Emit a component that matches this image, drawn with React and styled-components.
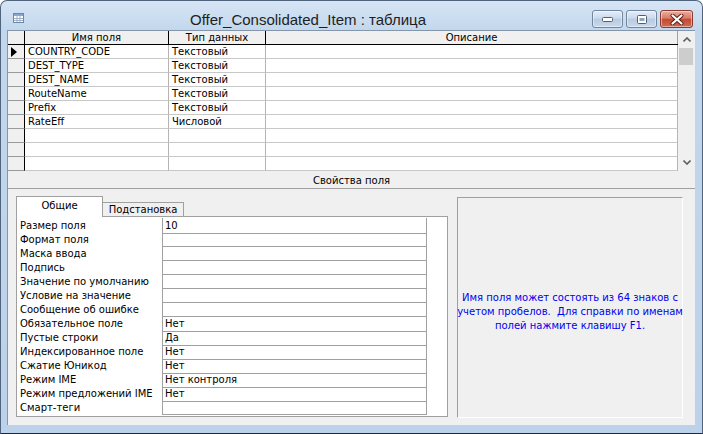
import React from 'react';
import styled, { createGlobalStyle } from 'styled-components';

const GlobalStyle = createGlobalStyle`
  html, body {
    margin: 0;
    padding: 0;
    background: #ffffff;
  }
  body {
    font-family: "DejaVu Sans", Tahoma, sans-serif;
    font-size: 10px;
    color: #000;
  }
`;

const fields = [
  { name: 'COUNTRY_CODE', type: 'Текстовый' },
  { name: 'DEST_TYPE', type: 'Текстовый' },
  { name: 'DEST_NAME', type: 'Текстовый' },
  { name: 'RouteName', type: 'Текстовый' },
  { name: 'Prefix', type: 'Текстовый' },
  { name: 'RateEff', type: 'Числовой' },
  { name: '', type: '' },
  { name: '', type: '' },
  { name: '', type: '' },
];

const props = [
  ['Размер поля', '10'],
  ['Формат поля', ''],
  ['Маска ввода', ''],
  ['Подпись', ''],
  ['Значение по умолчанию', ''],
  ['Условие на значение', ''],
  ['Сообщение об ошибке', ''],
  ['Обязательное поле', 'Нет'],
  ['Пустые строки', 'Да'],
  ['Индексированное поле', 'Нет'],
  ['Сжатие Юникод', 'Нет'],
  ['Режим IME', 'Нет контроля'],
  ['Режим предложений IME', 'Нет'],
  ['Смарт-теги', ''],
];

const Window = styled.div`
  width: 703px;
  height: 434px;
  box-sizing: border-box;
  border: 1px solid #50647e;
  border-bottom-color: #1d2a38;
  border-radius: 7px 7px 0 0;
  background: linear-gradient(#d6e5f5, #c2d7ed 30px, #bcd2ea);
  display: flex;
  flex-direction: column;
  padding: 0 7px 8px 6px;
  overflow: hidden;
`;

const TitleBar = styled.div`
  height: 29px;
  display: flex;
  align-items: flex-start;
`;

const AppIcon = styled.svg`
  margin: 12px 0 0 6px;
  flex: none;
`;

const Title = styled.div`
  flex: 1;
  text-align: center;
  font-family: "Liberation Sans", Arial, sans-serif;
  font-size: 15px;
  line-height: 18px;
  margin-top: 10px;
  color: #1e1e1e;
`;

const Buttons = styled.div`
  display: flex;
  gap: 3px;
  margin-top: 9px;
  margin-right: 2px;
`;

const CaptionButton = styled.div`
  width: ${p => p.$w}px;
  height: 18px;
  box-sizing: border-box;
  border: 1px solid ${p => (p.$close ? '#8c3a2f' : '#71859f')};
  border-radius: 3px;
  display: flex;
  align-items: center;
  justify-content: center;
  background: ${p =>
    p.$close
      ? 'linear-gradient(#eab0a2, #d87a66 45%, #c44a33 52%, #cf6a52)'
      : 'linear-gradient(#e6eef8, #cbd9ea 45%, #b7cbe2 52%, #c8d9ec)'};
  box-shadow: inset 0 0 0 1px rgba(255, 255, 255, 0.45);
`;

const Client = styled.div`
  flex: 1;
  display: flex;
  flex-direction: column;
  background: #f0f0f0;
  border-left: 1px solid #8596ab;
  border-top: 1px solid #8596ab;
  min-height: 0;
`;

const Upper = styled.div`
  height: 140px;
  display: flex;
  flex: none;
`;

const Grid = styled.div`
  flex: 1;
  background: #ffffff;
  overflow: hidden;
`;

const cols = '17px 144px 97px 1fr';

const HeaderRow = styled.div`
  display: grid;
  grid-template-columns: ${cols};
  height: 14px;
  box-sizing: border-box;
  border-bottom: 1px solid #000;
  background: #f0f0f0;
`;

const HeaderCell = styled.div`
  border-right: 1px solid ${p => (p.$strong ? '#000' : '#a0a0a0')};
  text-align: center;
  line-height: 14px;
  white-space: nowrap;
  overflow: hidden;
`;

const DataRow = styled.div`
  display: grid;
  grid-template-columns: ${cols};
  height: 14px;
`;

const Selector = styled.div`
  background: #f0f0f0;
  border-right: 1px solid #000;
  border-bottom: 1px solid #9a9a9a;
  display: flex;
  align-items: center;
  padding-left: 3px;
`;

const Cell = styled.div`
  border-right: 1px solid #b4b4b4;
  border-bottom: 1px solid #c8c8c8;
  padding-left: 3px;
  line-height: 14px;
  white-space: nowrap;
  overflow: hidden;
`;

const ScrollBar = styled.div`
  width: 17px;
  flex: none;
  background: #f0f0f0;
  display: flex;
  flex-direction: column;
`;

const ScrollButton = styled.div`
  height: 17px;
  display: flex;
  align-items: center;
  justify-content: center;
  flex: none;
`;

const Thumb = styled.div`
  height: 17px;
  margin: 0 2px 0 1px;
  background: #cdcdcd;
  flex: none;
`;

const Track = styled.div`
  flex: 1;
`;

const Band = styled.div`
  height: 18px;
  box-sizing: border-box;
  border-bottom: 1px solid #a0a0a0;
  text-align: center;
  line-height: 20px;
  flex: none;
`;

const Lower = styled.div`
  flex: 1;
  display: flex;
  gap: 9px;
  padding: 8px 0 0 8px;
`;

const PropsPane = styled.div`
  width: 432px;
  display: flex;
  flex-direction: column;
`;

const TabRow = styled.div`
  height: 20px;
  display: flex;
  align-items: flex-end;
  position: relative;
  z-index: 1;
  margin-bottom: -1px;
`;

const Tab = styled.div`
  box-sizing: border-box;
  width: ${p => (p.$active ? 87 : 81)}px;
  height: ${p => (p.$active ? 21 : 15)}px;
  border: 1px solid #a0a0a0;
  border-bottom: ${p => (p.$active ? 'none' : '1px solid #a0a0a0')};
  border-left: ${p => (p.$active ? '1px solid #a0a0a0' : 'none')};
  background: ${p => (p.$active ? '#ffffff' : '#f0f0f0')};
  text-align: center;
  line-height: ${p => (p.$active ? 18 : 14)}px;
`;

const PropBox = styled.div`
  height: 201px;
  box-sizing: border-box;
  border: 1px solid #a0a0a0;
  background: #ffffff;
  padding: 1px 20px 2px 0;
`;

const PropRow = styled.div`
  display: grid;
  grid-template-columns: 145px 265px;
  height: 14px;
`;

const PropLabel = styled.div`
  padding-left: 3px;
  line-height: 15px;
  white-space: nowrap;
`;

const PropValue = styled.div`
  box-sizing: border-box;
  border-left: 1px solid #a0a0a0;
  border-right: 1px solid #a0a0a0;
  border-bottom: 1px solid #a0a0a0;
  padding-left: 2px;
  line-height: 15px;
  white-space: nowrap;
`;

const Help = styled.div`
  width: 226px;
  height: 221px;
  box-sizing: border-box;
  border-top: 1px solid #a0a0a0;
  border-left: 1px solid #a0a0a0;
  border-right: 1px solid #ffffff;
  border-bottom: 1px solid #ffffff;
  display: flex;
  align-items: center;
  justify-content: center;
  text-align: center;
  color: #0000f0;
  line-height: 14px;
  white-space: pre;
  padding-top: 8px;
`;

const Chevron = ({ up }) => (
  <svg width="8" height="5" viewBox="0 0 8 5">
    <path
      d={up ? 'M0.5 4.5 L4 1 L7.5 4.5' : 'M0.5 0.5 L4 4 L7.5 0.5'}
      fill="none"
      stroke="#606060"
      strokeWidth="1.6"
    />
  </svg>
);

const TableIcon = () => (
  <AppIcon width="11" height="10" viewBox="0 0 11 10">
    <rect x="0.5" y="0.5" width="10" height="9" fill="#ffffff" stroke="#6f86a6" />
    <rect x="1" y="1" width="9" height="2" fill="#8aa6cf" />
    <path d="M1 5.5 H10 M1 7.5 H10 M4 3 V9 M7 3 V9" stroke="#9fb1c8" strokeWidth="1" />
  </AppIcon>
);

export default function App() {
  return (
    <>
      <GlobalStyle />
      <Window>
        <TitleBar>
          <TableIcon />
          <Title>Offer_Consolidated_Item : таблица</Title>
          <Buttons>
            <CaptionButton $w={31}>
              <svg width="11" height="6" viewBox="0 0 11 6">
                <rect x="0.5" y="1.5" width="10" height="4" rx="1" fill="#ffffff" stroke="#4f5f75" />
              </svg>
            </CaptionButton>
            <CaptionButton $w={31}>
              <svg width="10" height="9" viewBox="0 0 10 9">
                <rect x="0.5" y="0.5" width="9" height="8" rx="1" fill="#ffffff" stroke="#4f5f75" />
                <rect x="2.5" y="3" width="5" height="3" fill="#8fa2bb" />
              </svg>
            </CaptionButton>
            <CaptionButton $w={33} $close>
              <svg width="14" height="11" viewBox="0 0 14 11">
                <path d="M2.5 1.5 L11.5 9.5 M11.5 1.5 L2.5 9.5" stroke="#5a1a12" strokeWidth="4" strokeLinecap="round" />
                <path d="M2.5 1.5 L11.5 9.5 M11.5 1.5 L2.5 9.5" stroke="#ffffff" strokeWidth="2.2" strokeLinecap="round" />
              </svg>
            </CaptionButton>
          </Buttons>
        </TitleBar>
        <Client>
          <Upper>
            <Grid>
              <HeaderRow>
                <HeaderCell $strong />
                <HeaderCell $strong>Имя поля</HeaderCell>
                <HeaderCell $strong>Тип данных</HeaderCell>
                <HeaderCell>Описание</HeaderCell>
              </HeaderRow>
              {fields.map((f, i) => (
                <DataRow key={i}>
                  <Selector>
                    {i === 0 && (
                      <svg width="6" height="10" viewBox="0 0 6 10">
                        <path d="M0 0 L6 5 L0 10 Z" fill="#000" />
                      </svg>
                    )}
                  </Selector>
                  <Cell>{f.name}</Cell>
                  <Cell>{f.type}</Cell>
                  <Cell />
                </DataRow>
              ))}
            </Grid>
            <ScrollBar>
              <ScrollButton>
                <Chevron up />
              </ScrollButton>
              <Thumb />
              <Track />
              <ScrollButton>
                <Chevron />
              </ScrollButton>
            </ScrollBar>
          </Upper>
          <Band>Свойства поля</Band>
          <Lower>
            <PropsPane>
              <TabRow>
                <Tab $active>Общие</Tab>
                <Tab>Подстановка</Tab>
              </TabRow>
              <PropBox>
                {props.map(([label, value]) => (
                  <PropRow key={label}>
                    <PropLabel>{label}</PropLabel>
                    <PropValue>{value}</PropValue>
                  </PropRow>
                ))}
              </PropBox>
            </PropsPane>
            <Help>
              {'Имя поля может состоять из 64 знаков с\nучетом пробелов.  Для справки по именам\nполей нажмите клавишу F1.'}
            </Help>
          </Lower>
        </Client>
      </Window>
    </>
  );
}
